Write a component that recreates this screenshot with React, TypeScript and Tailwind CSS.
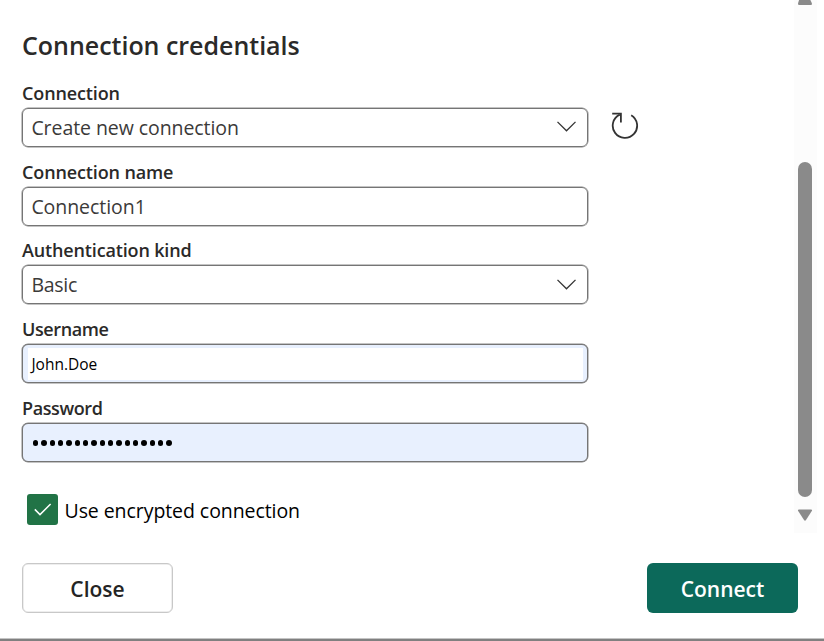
import type { ReactNode } from "react";

function Chevron() {
  return (
    <svg className="mr-[11px] h-3 w-5 shrink-0" viewBox="0 0 20 12" fill="none" stroke="#333" strokeWidth="1.3">
      <path d="M1.5 .9 10.5 9.8 19.5 .9" />
    </svg>
  );
}

function Field({ label, labelClass, children }: { label: string; labelClass: string; children: ReactNode }) {
  return (
    <div className="flex h-[78.75px] w-[567px] flex-col">
      <span className={"h-[28px] pt-[1px] text-[18px] leading-[24px] font-semibold whitespace-nowrap text-[#2b2a29] " + labelClass}>{label}</span>
      {children}
    </div>
  );
}

const box =
  "flex h-[39px] w-[566px] ml-[0.4px] items-center rounded-[6px] border border-[#757575] shadow-[0_0_0_0.5px_#8a8a8a]";

export default function App() {
  return (
    <div className="flex h-[641px] w-[824px] flex-col overflow-hidden bg-white font-['Open_Sans','Noto_Sans',sans-serif]">
      <div className="flex h-[533px] justify-between">
        <div className="flex flex-col pl-[22px]">
          <h1 className="h-[79.9px] pt-[29px] text-[25px] leading-[32px] font-semibold tracking-[-0.02px] whitespace-nowrap text-[#2b2a29]">
            <span>Connection credentials</span>
          </h1>
          <div className="flex">
            <Field label="Connection" labelClass="tracking-[-0.12px]">
              <div className={box}>
                <span className="flex-1 pt-px pl-2 text-[19.5px] leading-[29px] tracking-[-0.07px] text-[#3b3a39]"><span>Create new connection</span></span>
                <Chevron />
              </div>
            </Field>
            <svg className="mt-[30px] ml-[22px] h-[30px] w-[28px]" viewBox="0 0 28 30" fill="none" stroke="#333" strokeWidth="1.8">
              <path d="M8.8 4.6A12.2 12.2 0 1 0 20.2 5.2" />
              <path d="M1.2 3.6H9.9V12.6" />
            </svg>
          </div>
          <Field label="Connection name" labelClass="tracking-[-0.13px]">
            <div className={box}>
              <span className="flex-1 pl-2 text-[19.5px] tracking-[-0.05px] text-[#3b3a39]"><span>Connection1</span></span>
            </div>
          </Field>
          <Field label="Authentication kind" labelClass="tracking-[-0.15px]">
            <div className={box}>
              <span className="flex-1 pl-2 text-[19.5px] tracking-[-0.25px] text-[#3b3a39]"><span>Basic</span></span>
              <Chevron />
            </div>
          </Field>
          <Field label="Username" labelClass="tracking-[-0.4px]">
            <div className={box + " bg-[#e8f0fe] pt-[3px] pr-[4px] pb-[2px] pl-[5px]"}>
              <span className="flex h-full flex-1 items-center bg-white pl-[3px] text-[15.5px] text-black"><span>John.Doe</span></span>
            </div>
          </Field>
          <Field label="Password" labelClass="tracking-[-0.4px]">
            <div className={box + " bg-[#e8f0fe]"}>
              <span className="flex gap-[3.05px] pt-[1px] pl-[9.5px]">
                {Array.from({ length: 17 }, (_, i) => (
                  <span key={i} className="size-[5.3px] rounded-full bg-black" />
                ))}
              </span>
            </div>
          </Field>
          <label className="mt-[19.5px] ml-[5px] flex h-8 items-center">
            <span className="flex size-[31px] items-center justify-center rounded-[3px] bg-[#217346]">
              <svg className="h-[13px] w-[18px]" viewBox="0 0 18 13" fill="none" stroke="white" strokeWidth="1.5">
                <path d="M.8 6.4 6 11.6 16.6 1" />
              </svg>
            </span>
            <span className="pt-[2px] pl-[6.5px] text-[19.5px] tracking-[-0.07px] whitespace-nowrap text-black"><span>Use encrypted connection</span></span>
          </label>
        </div>
        <div className="mr-[7px] flex h-[533px] w-[23px] flex-col items-start bg-[#fcfcfc] pl-[4px]">
          <svg className="-ml-px h-[161.5px] w-4" viewBox="0 0 16 161.5" fill="#8a8a8a">
            <path d="M3 -3H12L15 3.5Q15 5 14 5H2Q1 5 1 3.5Z" />
          </svg>
          <div className="h-[335px] w-[14px] rounded-full bg-[#8a8a8a]" />
          <svg className="-ml-px mt-[12px] h-3 w-4" viewBox="0 0 16 12" fill="#8a8a8a">
            <path d="M2 .5H14Q15.6 .5 14.8 2L9 11Q8 12.4 7 11L1.2 2Q.4 .5 2 .5Z" />
          </svg>
        </div>
      </div>
      <div className="flex h-[105px] items-start justify-between pt-[30px] pr-[26px] pl-[22px]">
        <button className="h-[50px] w-[151px] rounded-[6px] border border-[#c8c8c8] pt-[2px] text-[21px] leading-[28px] font-semibold text-[#242424] shadow-[inset_0_0_0_0.5px_#dddddd]"><span>Close</span></button>
        <button className="h-[50px] w-[151px] rounded-[6px] bg-[#0c695a] pt-[2px] text-[21px] leading-[28px] font-semibold text-white"><span>Connect</span></button>
      </div>
      <div className="h-[3px] border-t border-[#c4c4c4] bg-[#808080]" />
    </div>
  );
}
